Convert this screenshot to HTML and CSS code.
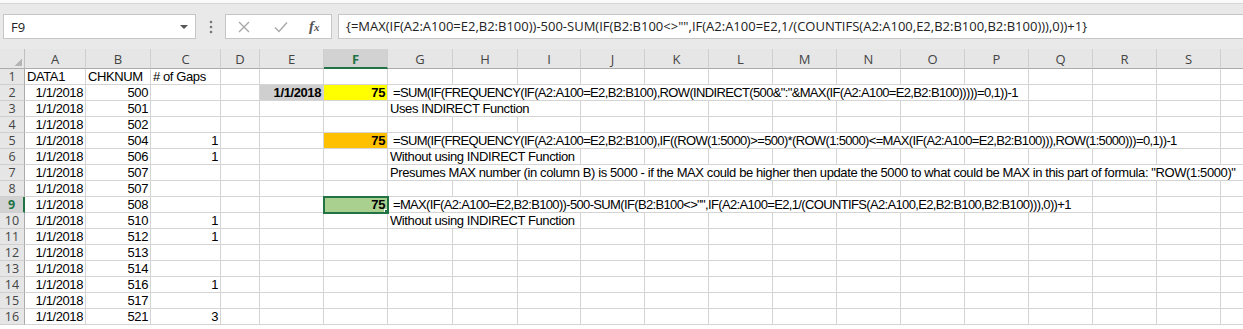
FILE: index.html
```html
<!DOCTYPE html>
<html>
<head>
  <title>Gaps - Excel</title>
  <link rel="stylesheet" href="styles.css">
</head>
<body>
  <div class="ribbon-edge"></div>
  <div class="formula-area">
    <div class="name-box">
      <span>F9</span>
      <span class="caret"></span>
    </div>
    <div class="grip">
      <svg width="4" height="14" viewBox="0 0 4 14"><circle cx="2" cy="2" r="1.3"/><circle cx="2" cy="7" r="1.3"/><circle cx="2" cy="12" r="1.3"/></svg>
    </div>
    <div class="fx-buttons">
      <svg class="btn-icon" width="12" height="12" viewBox="0 0 12 12"><path d="M1 1 L11 11 M11 1 L1 11"/></svg>
      <svg class="btn-icon" width="14" height="12" viewBox="0 0 14 12"><path d="M1 6.5 L5 10.5 L13 1.5"/></svg>
      <span class="fx">f<span class="fx-x">x</span></span>
    </div>
    <div class="formula-input">{=MAX(IF(A2:A100=E2,B2:B100))-500-SUM(IF(B2:B100&lt;&gt;"",IF(A2:A100=E2,1/(COUNTIFS(A2:A100,E2,B2:B100,B2:B100))),0))+1}</div>
  </div>

  <div class="sheet" id="sheet"></div>

  <script>
    // last column (T) runs past the window edge, its letter is not visible
    const columns = ["A","B","C","D","E","F","G","H","I","J","K","L","M","N","O","P","Q","R","S",""];
    const chkNums = [500, 501, 502, 504, 506, 507, 507, 508, 510, 512, 513, 514, 516, 517, 521];
    const gaps = { 5: 1, 6: 1, 10: 1, 11: 1, 14: 1, 16: 3 };

    // extra cells per row: [column, text, classes, span]
    const notes = {
      2: [["E", "1/1/2018", "num bold grey"], ["F", "75", "num bold yellow"],
          ["G", ' =SUM(IF(FREQUENCY(IF(A2:A100=E2,B2:B100),ROW(INDIRECT(500&":"&MAX(IF(A2:A100=E2,B2:B100)))))=0,1))-1', "formula", 10]],
      3: [["G", "Uses INDIRECT Function", "", 3]],
      5: [["F", "75", "num bold orange"],
          ["G", " =SUM(IF(FREQUENCY(IF(A2:A100=E2,B2:B100),IF((ROW(1:5000)>=500)*(ROW(1:5000)<=MAX(IF(A2:A100=E2,B2:B100))),ROW(1:5000)))=0,1))-1", "formula", 13]],
      6: [["G", "Without using INDIRECT Function", "", 3]],
      7: [["G", 'Presumes MAX number (in column B) is 5000 - if the MAX could be higher then update the 5000 to what could be MAX in this part of formula: "ROW(1:5000)"', "", 14]],
      9: [["F", "75", "num bold green active"],
          ["G", ' =MAX(IF(A2:A100=E2,B2:B100))-500-SUM(IF(B2:B100<>"",IF(A2:A100=E2,1/(COUNTIFS(A2:A100,E2,B2:B100,B2:B100))),0))+1', "formula", 11]],
      10: [["G", "Without using INDIRECT Function", "", 3]]
    };

    const sheet = document.getElementById("sheet");

    const addCell = (text, cls, span) => {
      const cell = document.createElement("div");
      cell.className = "cell " + (cls || "");
      if (span) cell.classList.add("span-" + span);
      cell.textContent = text === undefined ? "" : text;
      sheet.appendChild(cell);
    };

    // column headers
    addCell("", "corner");
    columns.forEach(col => addCell(col, "col-head" + (col === "F" ? " selected" : "")));

    for (let r = 1; r <= 16; r++) {
      addCell(r, "row-head" + (r === 9 ? " selected" : ""));

      const cells = {};
      if (r === 1) {
        cells.A = ["DATA1", ""];
        cells.B = ["CHKNUM", ""];
        cells.C = ["# of Gaps", ""];
      } else {
        cells.A = ["1/1/2018", "num"];
        cells.B = [chkNums[r - 2], "num"];
        if (gaps[r]) cells.C = [gaps[r], "num"];
      }
      (notes[r] || []).forEach(n => { cells[n[0]] = [n[1], n[2], n[3]]; });

      for (let i = 0; i < columns.length; i++) {
        const c = cells[columns[i]];
        if (c) {
          addCell(c[0], c[1], c[2]);
          if (c[2]) i += c[2] - 1;
        } else {
          addCell("", "");
        }
      }
    }
  </script>
</body>
</html>
```

FILE: styles.css
```css
body {
  margin: 0;
  font-family: "Liberation Sans", Arial, sans-serif;
  background-color: #ffffff;
  overflow: hidden;
}

/* Formula bar */
.ribbon-edge {
  height: 3px;
  background-color: #fafafa;
  border-bottom: 1px solid #d6d6d6;
}
.formula-area {
  display: flex;
  align-items: flex-start;
  height: 45px;
  padding-top: 10px;
  box-sizing: border-box;
  background-color: #e9e9e9;
}
.name-box {
  display: flex;
  align-items: center;
  justify-content: space-between;
  width: 193px;
  height: 25px;
  margin-left: 3px;
  padding: 0 7px 0 7px;
  box-sizing: border-box;
  border: 1px solid #c6c6c6;
  background-color: #ffffff;
  font-family: "Open Sans", sans-serif;
  font-size: 13px;
  color: #222;
}
.caret {
  width: 0;
  height: 0;
  border-left: 4px solid transparent;
  border-right: 4px solid transparent;
  border-top: 4px solid #555;
}
.grip {
  display: flex;
  justify-content: center;
  width: 29px;
  padding-top: 6px;
  fill: #777;
}
.fx-buttons {
  display: flex;
  align-items: center;
  width: 107px;
  height: 25px;
  box-sizing: border-box;
  border: 1px solid #c6c6c6;
  background-color: #ffffff;
  padding-left: 12px;
}
.btn-icon {
  fill: none;
  stroke: #a8a8a8;
  stroke-width: 1.4;
  margin-right: 24px;
}
.fx {
  font-family: "Liberation Serif", serif;
  font-style: italic;
  font-weight: bold;
  font-size: 15px;
  color: #555;
  margin-left: -3px;
}
.fx-x {
  font-size: 11px;
}
.formula-input {
  flex: 1;
  height: 25px;
  margin-left: 6px;
  padding-left: 7px;
  box-sizing: border-box;
  border: 1px solid #c6c6c6;
  border-right: none;
  background-color: #ffffff;
  font-family: "Open Sans", sans-serif;
  font-size: 13px;
  line-height: 22px;
  color: #222;
  white-space: nowrap;
}

/* Worksheet grid */
.sheet {
  display: grid;
  grid-template-columns: 25px 61px 65px 70px 39px 64px 64px 65px 65px 63px 64px repeat(10, 64px);
  grid-template-rows: 20px;
  grid-auto-rows: 16px;
}
.cell {
  box-sizing: border-box;
  border-right: 1px solid #d4d4d4;
  border-bottom: 1px solid #d4d4d4;
  padding: 0 2px;
  font-size: 13px;
  letter-spacing: -0.4px;
  line-height: 15px;
  white-space: pre;
  overflow: hidden;
  color: #000;
}
.formula { letter-spacing: -0.65px; }
.span-3 { grid-column: span 3; overflow: visible; }
.span-10 { grid-column: span 10; overflow: visible; }
.span-11 { grid-column: span 11; overflow: visible; }
.span-13 { grid-column: span 13; overflow: visible; }
.span-14 { grid-column: span 14; overflow: visible; }

.num { text-align: right; }
.bold { font-weight: bold; }
.grey { background-color: #cfcfcf; }
.yellow { background-color: #ffff00; }
.orange { background-color: #ffc000; }
.green { background-color: #a9d08e; }

.active {
  position: relative;
  outline: 2px solid #217346;
  outline-offset: -1px;
  z-index: 1;
}
.active::after {
  content: "";
  position: absolute;
  right: -4px;
  bottom: -4px;
  width: 5px;
  height: 5px;
  background-color: #217346;
  border: 1px solid #ffffff;
}

/* Headers */
.corner, .col-head, .row-head {
  background-color: #e6e6e6;
  font-family: "Open Sans", sans-serif;
  letter-spacing: 0;
  color: #444;
  text-align: center;
  overflow: visible;
}
.corner {
  border-right: 1px solid #c0c0c0;
  border-bottom: 1px solid #ababab;
  background-image: linear-gradient(135deg, transparent 62%, #b5b5b5 62%);
  background-size: 10px 10px;
  background-repeat: no-repeat;
  background-position: right 2px bottom 2px;
}
.col-head {
  font-size: 13px;
  line-height: 20px;
  border-right: 1px solid #cfcfcf;
  border-bottom: 1px solid #ababab;
}
.row-head {
  font-size: 12.5px;
  line-height: 15px;
  padding: 0;
  border-right: 1px solid #ababab;
  border-bottom: 1px solid #cfcfcf;
}
.col-head.selected {
  background-color: #d2d2d2;
  color: #217346;
  font-weight: bold;
  border-bottom: 2px solid #217346;
}
.row-head.selected {
  background-color: #d2d2d2;
  color: #217346;
  font-weight: bold;
  border-right: 2px solid #217346;
}
```
